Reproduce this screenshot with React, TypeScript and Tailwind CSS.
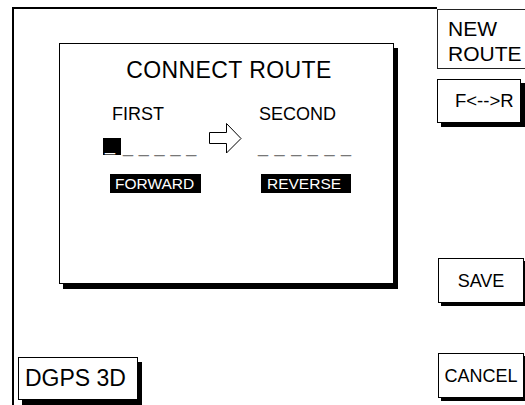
import React from 'react';

/**
 * ConnectRoute
 * Plotter-style "connect route" dialog with the soft-key column on the right.
 */

const SoftKey = ({ label, className = '' }: { label: string; className?: string }) => (
  <div
    className={`flex h-[45px] w-[86px] items-center justify-center border border-black bg-white text-[18px] leading-[18px] shadow-[3px_3px_0_#000] ${className}`}
  >
    {label}
  </div>
);

const Arrow = () => (
  <svg width="34" height="32" viewBox="0 0 34 32" className="mt-[17px]">
    <polygon
      points="1.5,10.5 18.5,10.5 18.5,1.5 33,16.5 18.5,31 18.5,21.5 1.5,21.5"
      fill="#fff"
      stroke="#000"
      strokeWidth="1"
    />
  </svg>
);

export default function App() {
  return (
    <div className="flex h-[405px] w-[525px] overflow-hidden bg-white text-black font-['Liberation_Sans',Arial,sans-serif]">
      {/* main screen area */}
      <div className="flex w-[437px] flex-col pl-[12px] pt-[7px]">
        <div className="flex flex-1 flex-col border-l-2 border-t-2 border-black">
          {/* dialog */}
          <div className="ml-[45px] mt-[34px] flex h-[241px] w-[335px] flex-col border border-black bg-white shadow-[4px_5px_0_#000]">
            <div className="mt-[15px] pl-[5px] text-center text-[23px] leading-[23px] tracking-[0.4px]">
              CONNECT ROUTE
            </div>

            <div className="ml-[43px] mt-[23px] flex">
              {/* first */}
              <div className="flex w-[105px] flex-col">
                <div className="pl-[9px] text-[18px] leading-[18px]">FIRST</div>
                <div className="mt-[15px] flex h-[17px] items-start text-[18px] leading-[17px]">
                  <span className="block h-[17px] w-[18px] bg-black pl-[2px] leading-[12px] text-white">_</span>
                  <span className="pl-[2px] tracking-[0.4px] text-[#777]">_ _ _ _ _</span>
                </div>
                <div className="ml-[7px] mt-[19px] h-[19px] w-[91px] bg-black pl-[5px] text-[15.5px] leading-[19px] text-white">
                  FORWARD
                </div>
              </div>

              {/* arrow */}
              <div className="w-[50px]">
                <Arrow />
              </div>

              {/* second */}
              <div className="flex flex-col">
                <div className="pl-[1px] text-[18px] leading-[18px]">SECOND</div>
                <div className="mt-[15px] h-[17px] text-[18px] leading-[17px] tracking-[0.8px] text-[#777]">
                  _ _ _ _ _ _
                </div>
                <div className="ml-[3px] mt-[19px] h-[19px] w-[90px] bg-black pl-[6px] text-[15.5px] leading-[19px] text-white">
                  REVERSE
                </div>
              </div>
            </div>
          </div>

          {/* position fix status */}
          <div className="mb-[5px] ml-[4px] mt-auto flex h-[43px] w-[120px] items-center border border-black bg-white pl-[6px] text-[23px] leading-[23px] shadow-[4px_5px_0_#000]">
            DGPS 3D
          </div>
        </div>
      </div>

      {/* soft keys */}
      <div className="flex w-[88px] flex-col pt-[9px]">
        <div className="h-[60px] w-[100px] border-y border-l border-[#222] pl-[10px] pt-[6px] text-[21px] leading-[25px]">
          NEW
          <br />
          ROUTE
        </div>
        <div className="mt-[10px] flex h-[44px] w-[84px] items-center border border-black pl-[17px] text-[18.5px] leading-[18px] shadow-[4px_4px_0_#000]">
          F&lt;--&gt;R
        </div>
        <SoftKey label="SAVE" className="ml-[1px] mt-[135px]" />
        <SoftKey label="CANCEL" className="ml-[1px] mt-[50px]" />
      </div>
    </div>
  );
}
